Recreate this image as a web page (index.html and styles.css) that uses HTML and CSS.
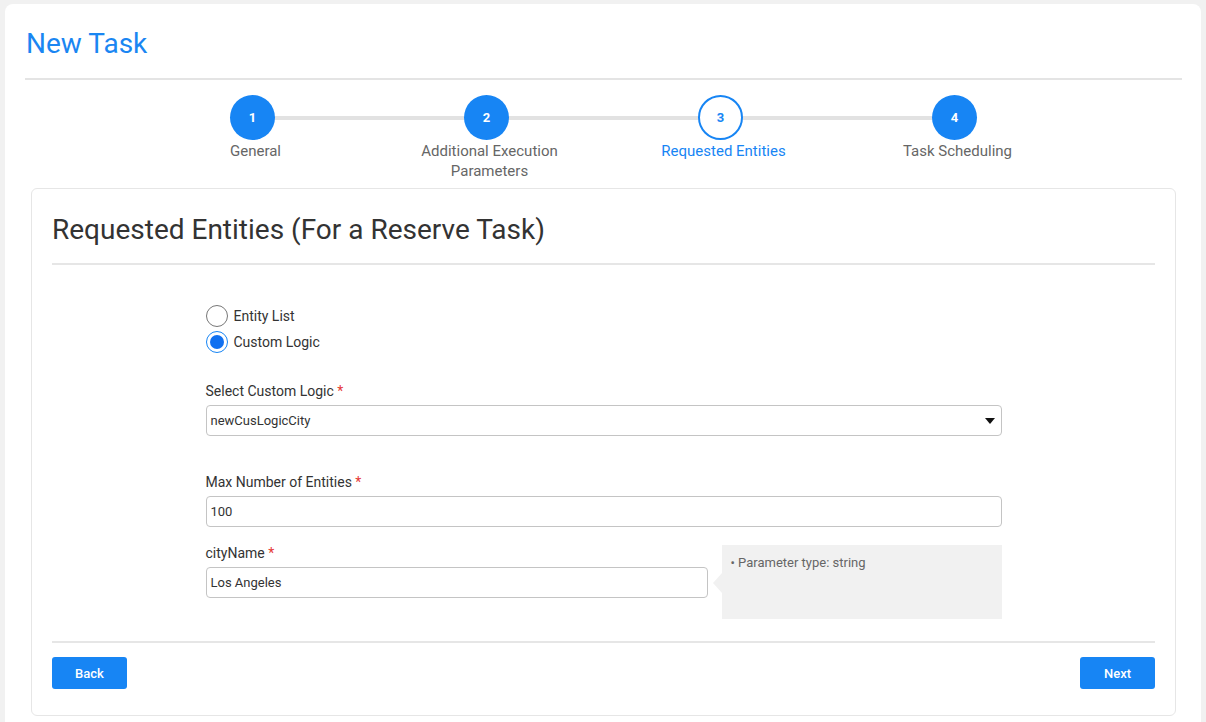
FILE: index.html
```html
<!DOCTYPE html>
<html lang="en">
<head>
<meta charset="utf-8">
<title>New Task</title>
<link rel="stylesheet" href="styles.css">
</head>
<body>
<div class="page">
  <h1 class="page-title">New Task</h1>

  <ol class="stepper">
    <li class="step done"><span class="dot">1</span><span class="label">General</span></li>
    <li class="step done"><span class="dot">2</span><span class="label">Additional Execution Parameters</span></li>
    <li class="step current"><span class="dot">3</span><span class="label">Requested Entities</span></li>
    <li class="step done"><span class="dot">4</span><span class="label">Task Scheduling</span></li>
  </ol>

  <section class="card">
    <h2 class="card-title">Requested Entities (For a Reserve Task)</h2>

    <div class="form">
      <div class="radios">
        <label class="radio"><span class="ring"></span>Entity List</label>
        <label class="radio checked"><span class="ring"></span>Custom Logic</label>
      </div>

      <div class="field select-field">
        <div class="field-label">Select Custom Logic <span class="req">*</span></div>
        <div class="select">
          <span>newCusLogicCity</span>
          <svg class="caret" width="10" height="6" viewBox="0 0 10 6"><path d="M0 0h10L5 6z" fill="#111"/></svg>
        </div>
      </div>

      <div class="field max-field">
        <div class="field-label">Max Number of Entities <span class="req">*</span></div>
        <div class="input">100</div>
      </div>

      <div class="param-row">
        <div class="field param-field">
          <div class="field-label">cityName <span class="req">*</span></div>
          <div class="input">Los Angeles</div>
        </div>
        <div class="hint">• Parameter type: string</div>
      </div>
    </div>

    <div class="actions">
      <button class="btn">Back</button>
      <button class="btn">Next</button>
    </div>
  </section>
</div>
</body>
</html>
```

FILE: styles.css
```css
* { box-sizing: border-box; }

html, body {
  margin: 0;
  background: #f1f1f1;
  font-family: Roboto, "Liberation Sans", Arial, sans-serif;
  color: #333;
}

body {
  padding: 4px 5px 0 5px;
  height: 722px;
  overflow: hidden;
}

.page {
  background: #fff;
  border-radius: 8px;
  padding: 0 19px 0 20px;
  min-height: 760px;
}

.page-title {
  margin: 0;
  padding: 25px 0 19px 1px;
  font-size: 28px;
  line-height: 30px;
  font-weight: 400;
  color: #1a86f2;
  border-bottom: 2px solid #e4e4e4;
}

/* stepper */
.stepper {
  list-style: none;
  margin: 15px auto 0;
  padding: 0;
  display: grid;
  grid-template-columns: repeat(4, 234px);
  justify-content: center;
}

.step {
  position: relative;
  display: flex;
  flex-direction: column;
  align-items: center;
}

.step:not(:last-child)::after {
  content: "";
  position: absolute;
  top: 21px;
  left: 50%;
  width: 100%;
  height: 4px;
  background: #e2e2e2;
  z-index: 0;
}

.dot {
  position: relative;
  z-index: 1;
  width: 45px;
  height: 45px;
  border-radius: 50%;
  background: #1785f4;
  color: #fff;
  font-size: 13px;
  font-weight: 700;
  display: flex;
  align-items: center;
  justify-content: center;
}

.step.current .dot {
  background: #fff;
  border: 2px solid #1785f4;
  color: #1785f4;
}

.label {
  max-width: 150px;
  text-align: center;
  font-size: 15px;
  line-height: 20px;
  color: #666;
  margin: 1px 0 0 6px;
}

.step.current .label { color: #1785f4; }

/* card */
.card {
  margin: 7px 6px 0;
  border: 1px solid #e6e6e6;
  border-radius: 6px;
  padding: 0 20px 26px;
}

.card-title {
  margin: 0;
  padding: 26px 0 18px;
  font-size: 28px;
  line-height: 30px;
  font-weight: 400;
  color: #333;
  border-bottom: 2px solid #e6e6e6;
}

.form {
  width: 796px;
  margin: 0 auto;
  padding: 40px 0 22px;
}

.radios {
  display: flex;
  flex-direction: column;
  gap: 4px;
}

.radio {
  display: flex;
  align-items: center;
  gap: 6px;
  font-size: 14px;
  line-height: 22px;
  color: #333;
}

.ring {
  width: 22px;
  height: 22px;
  border-radius: 50%;
  border: 1px solid #777;
  background: #fff;
  display: flex;
  align-items: center;
  justify-content: center;
}

.radio.checked .ring { border-color: #1785f4; }

.radio.checked .ring::after {
  content: "";
  width: 14px;
  height: 14px;
  border-radius: 50%;
  background: #1070f0;
}

.field-label {
  font-size: 14px;
  line-height: 18px;
  color: #333;
  margin-bottom: 5px;
}

.req { color: #e53935; }

.select-field { margin-top: 29px; }
.max-field { margin-top: 37px; }

.select, .input {
  height: 31px;
  border: 1px solid #c4c4c4;
  border-radius: 4px;
  font-size: 13px;
  color: #333;
  padding: 0 4px;
  display: flex;
  align-items: center;
  background: #fff;
}

.select { justify-content: space-between; padding-right: 6px; }
.caret { margin-top: 1px; }

.param-row {
  margin-top: 17px;
  display: flex;
  gap: 14px;
  align-items: flex-start;
}

.param-field { width: 502px; }

.hint {
  position: relative;
  width: 280px;
  height: 74px;
  margin-top: 1px;
  background: #f1f1f1;
  color: #666;
  font-size: 13px;
  line-height: 16px;
  padding: 10px 9px;
}

.hint::before {
  content: "";
  position: absolute;
  left: -9px;
  top: 28px;
  border-style: solid;
  border-width: 10px 9px 10px 0;
  border-color: transparent #f1f1f1 transparent transparent;
}

.actions {
  border-top: 2px solid #e6e6e6;
  padding-top: 14px;
  display: flex;
  justify-content: space-between;
}

.btn {
  width: 75px;
  height: 32px;
  border: 0;
  border-radius: 3px;
  background: #1785f4;
  color: #fff;
  font-family: Roboto, "Liberation Sans", Arial, sans-serif;
  font-size: 13px;
  font-weight: 500;
}
```
